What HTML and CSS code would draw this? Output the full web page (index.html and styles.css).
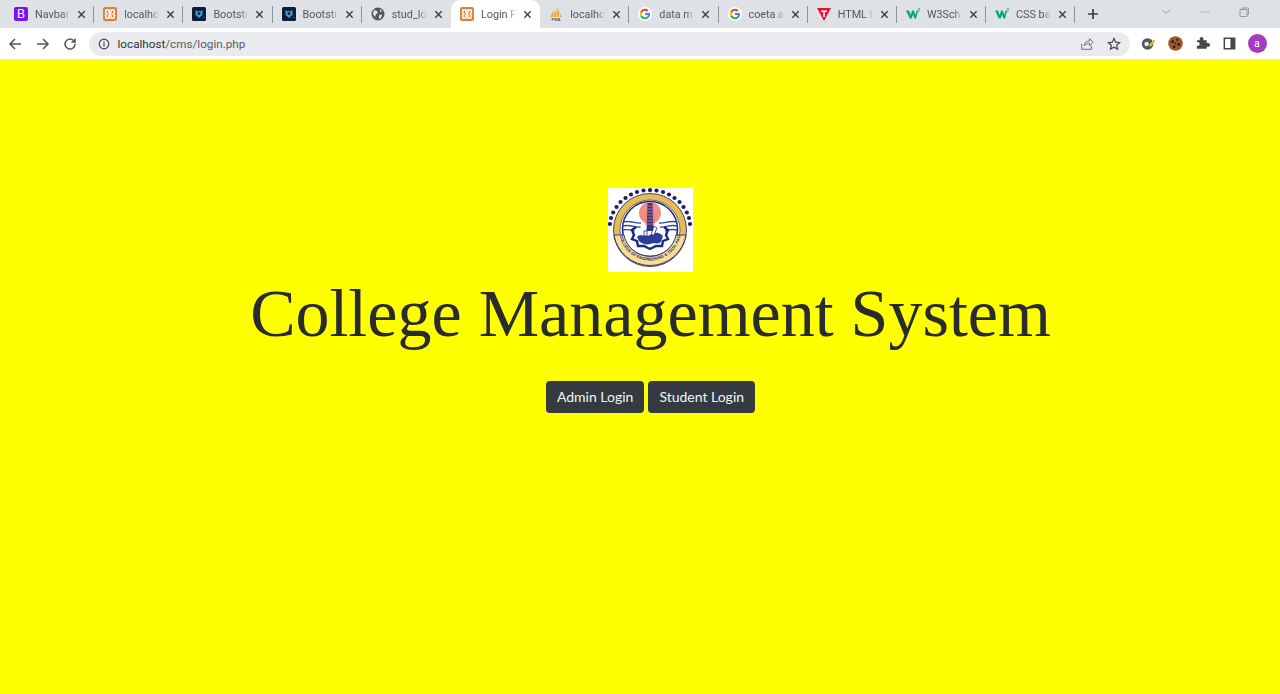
FILE: index.html
```html
<!DOCTYPE html>
<html lang="en">
<head>
<meta charset="utf-8">
<title>Login Page</title>
<link rel="stylesheet" href="styles.css">
</head>
<body>
<svg class="defs" width="0" height="0" aria-hidden="true">
  <symbol id="i-xampp" viewBox="0 0 14 14"><rect width="14" height="14" rx="2" fill="#e0803a"/><path d="M3 3h3v2.500L7 7 6 8.500V11H3l-.5-2.500L4 7 2.500 5.500zM11 3H8v2.500L7 7l1 1.500V11h3l.5-2.500L10 7l1.500-1.500z" fill="none" stroke="#fff" stroke-width="1.500"/></symbol>
  <symbol id="i-boot" viewBox="0 0 14 14"><rect width="14" height="14" rx="1.500" fill="#0b1c3d"/><path d="M3.500 3l1.500 1h4l1.500-1v5L7 11 3.500 8z" fill="#3f9bc9"/><circle cx="7" cy="6.500" r="1.400" fill="#0b1c3d"/><rect x="11" y="10" width="2" height="1" fill="#7a2bd0"/></symbol>
  <symbol id="i-g" viewBox="0 0 16 16"><circle cx="8" cy="8" r="8" fill="#fff"/><path d="M13.800 8.100c0-.4 0-.8-.1-1.200H8v2.300h3.300c-.1.800-.6 1.400-1.200 1.800l1.900 1.500c1.100-1 1.800-2.500 1.800-4.400z" fill="#4285f4"/><path d="M8 14c1.600 0 3-.5 4-1.500l-1.900-1.500c-.5.400-1.200.6-2.100.6-1.600 0-2.900-1-3.400-2.500l-2 1.500C3.600 12.600 5.600 14 8 14z" fill="#34a853"/><path d="M4.600 9.100c-.3-.7-.3-1.500 0-2.200l-2-1.500c-.8 1.600-.8 3.600 0 5.200z" fill="#fbbc05"/><path d="M8 4.400c.9 0 1.700.3 2.300.9l1.700-1.700C11 2.600 9.600 2 8 2 5.600 2 3.600 3.400 2.600 5.400l2 1.500C5.100 5.400 6.400 4.400 8 4.400z" fill="#ea4335"/></symbol>
  <symbol id="i-w3" viewBox="0 0 16 12"><path d="M0 2h3.500l1.800 5L7 2h2l1.700 5 1.500-5H14l-2.500 9H9.500L8 6.500 6.500 11H4.300z" fill="#04aa6d"/><path d="M13.500 0h2.300l-1 1.200c.7.200.8 1.600-.6 1.700l-.8-.1" fill="none" stroke="#04aa6d" stroke-width=".8"/></symbol>
  <symbol id="i-x" viewBox="0 0 10 10"><path d="M1.500 1.500l7 7M8.500 1.500l-7 7" stroke="#3c4043" stroke-width="1.500" fill="none"/></symbol>
</svg>

<header class="chrome">
  <div class="tabstrip">
    <div class="tab"><svg class="fav" viewBox="0 0 14 14"><rect width="14" height="14" rx="2" fill="#7a12f0"/><text x="7" y="11" class="fav-b">B</text></svg><span class="tab-title">Navbar</span><svg class="close"><use href="#i-x"/></svg></div>
    <div class="tab"><svg class="fav"><use href="#i-xampp"/></svg><span class="tab-title">localhost</span><svg class="close"><use href="#i-x"/></svg></div>
    <div class="tab"><svg class="fav"><use href="#i-boot"/></svg><span class="tab-title">Bootstrap</span><svg class="close"><use href="#i-x"/></svg></div>
    <div class="tab"><svg class="fav"><use href="#i-boot"/></svg><span class="tab-title">Bootstrap</span><svg class="close"><use href="#i-x"/></svg></div>
    <div class="tab"><svg class="fav" viewBox="0 0 14 14"><circle cx="7" cy="7" r="6.500" fill="#55585c"/><path d="M3 3l3 1 1 2-2 1-1 3-2-3zM9 2l2 2-2 1zM8 8l3-.5-1 3.500-2 1z" fill="#e3e5e8"/></svg><span class="tab-title">stud_login</span><svg class="close"><use href="#i-x"/></svg></div>
    <div class="tab tab-active"><svg class="fav"><use href="#i-xampp"/></svg><span class="tab-title">Login Page</span><svg class="close"><use href="#i-x"/></svg></div>
    <div class="tab"><svg class="fav" viewBox="0 0 14 14"><path d="M1 10L5 3l1.500 3L8 1l5 9z" fill="#e8a33c"/><path d="M5 4v6M8 3v7M10.500 6v4" stroke="#fff" stroke-width=".6"/><rect y="10" width="14" height="4" fill="#dee1e6"/><text x="7" y="13.800" class="fav-pma">PMA</text></svg><span class="tab-title">localhost</span><svg class="close"><use href="#i-x"/></svg></div>
    <div class="tab"><svg class="fav"><use href="#i-g"/></svg><span class="tab-title">data mining</span><svg class="close"><use href="#i-x"/></svg></div>
    <div class="tab"><svg class="fav"><use href="#i-g"/></svg><span class="tab-title">coeta akola</span><svg class="close"><use href="#i-x"/></svg></div>
    <div class="tab"><svg class="fav" viewBox="0 0 14 14"><path d="M0 1h14L7 14z" fill="#e8112d"/><path d="M4 3.500h6v1.500H7.800v5H6.200V5H4z" fill="#fff"/></svg><span class="tab-title">HTML Bas</span><svg class="close"><use href="#i-x"/></svg></div>
    <div class="tab"><svg class="fav"><use href="#i-w3"/></svg><span class="tab-title">W3Schools</span><svg class="close"><use href="#i-x"/></svg></div>
    <div class="tab"><svg class="fav"><use href="#i-w3"/></svg><span class="tab-title">CSS back</span><svg class="close"><use href="#i-x"/></svg></div>
    <svg class="newtab" viewBox="0 0 12 12"><path d="M6 1v10M1 6h10" stroke="#3c4043" stroke-width="1.700"/></svg>
    <div class="winctl">
      <svg class="win" viewBox="0 0 12 12"><path d="M2 4l4 3 4-3" stroke="#a5a7ab" fill="none"/></svg>
      <svg class="win" viewBox="0 0 12 12"><path d="M1 6h10" stroke="#b5b7ba"/></svg>
      <svg class="win" viewBox="0 0 12 12"><path d="M2 3.500h7v7H2zM4 3.500V2h6.500v6.500H9" stroke="#9a9c9f" fill="none"/></svg>
    </div>
  </div>
  <div class="toolbar">
    <svg class="tool" viewBox="0 0 16 16"><path d="M14 8H3M8 3L3 8l5 5" stroke="#50545a" stroke-width="1.500" fill="none"/></svg>
    <svg class="tool" viewBox="0 0 16 16"><path d="M2 8h11M8 3l5 5-5 5" stroke="#50545a" stroke-width="1.500" fill="none"/></svg>
    <svg class="tool" viewBox="0 0 16 16"><path d="M13 8a5 5 0 1 1-1.500-3.500L13 6V2.500M13 6H9.500" stroke="#50545a" stroke-width="1.500" fill="none"/></svg>
    <div class="omnibox">
      <svg class="info" viewBox="0 0 12 12"><circle cx="6" cy="6" r="4.800" stroke="#45484c" stroke-width="1.200" fill="none"/><path d="M6 5.300v3.200M6 3.300v1.200" stroke="#45484c" stroke-width="1.200"/></svg>
      <span class="url"><span class="host">localhost</span>/cms/login.php</span>
      <svg class="omni-icon" viewBox="0 0 16 16"><path d="M2 8v6h11v-4M5 10c0-4 3-5.500 6-5.500V2l4 4-4 4V7.500c-2.500 0-4.500.5-6 2.500z" stroke="#5a5d61" fill="none"/></svg>
      <svg class="omni-icon" viewBox="0 0 16 16"><path d="M8 1.800l1.900 4.100 4.500.5-3.300 3 .9 4.400L8 11.600l-4 2.200.9-4.400-3.300-3 4.500-.5z" stroke="#45484c" stroke-width="1.400" fill="none"/></svg>
    </div>
    <div class="extensions">
      <svg class="ext" viewBox="0 0 16 16"><circle cx="7" cy="8.500" r="6.200" fill="#55595c"/><circle cx="6" cy="8.500" r="2.400" fill="#e8e8e8"/><path d="M8.500 9.500l5.500-6 1.500 1.500-5 6.500z" fill="#e8b83c"/></svg>
      <svg class="ext" viewBox="0 0 16 16"><circle cx="8" cy="8" r="7.800" fill="#9c5a2e"/><circle cx="5" cy="6" r="1.500" fill="#33190b"/><circle cx="10" cy="4" r="1.200" fill="#33190b"/><circle cx="11.500" cy="9" r="1.500" fill="#33190b"/><circle cx="6.500" cy="11.500" r="1.400" fill="#33190b"/><circle cx="8" cy="7.800" r="1" fill="#33190b"/></svg>
      <svg class="ext" viewBox="0 0 16 16"><path d="M2 6h3V4.500a2 2 0 0 1 4 0V6h3.500v3H14a2 2 0 0 1 0 4h-1.500v2H2v-3h1a2 2 0 0 0 0-4H2z" fill="#45484c" transform="translate(0 -1.500)"/></svg>
      <svg class="ext" viewBox="0 0 16 16"><path d="M2.500 2.500h11v11h-11z" stroke="#45484c" stroke-width="1.600" fill="none"/><rect x="9" y="2.500" width="4.500" height="11" fill="#45484c"/></svg>
      <span class="avatar">a</span>
    </div>
  </div>
</header>

<main class="page">
  <svg class="logo" viewBox="0 0 85 84" role="img" aria-label="College of Engineering and Technology, Akola emblem">
    <rect width="85" height="84" fill="#fff"/>
    <g fill="#1b1a6e">
      <circle cx="42" cy="2.200" r="2.100"/><circle cx="48.500" cy="2.500" r="2.100"/><circle cx="55" cy="4" r="2.100"/><circle cx="61" cy="6.500" r="2.100"/><circle cx="66.500" cy="10" r="2.100"/><circle cx="71.500" cy="14" r="2.100"/><circle cx="75.500" cy="19" r="2.100"/><circle cx="78.800" cy="24.500" r="2.100"/><circle cx="81" cy="30" r="2.100"/><circle cx="82" cy="36" r="2.100"/>
      <circle cx="35.500" cy="2.500" r="2.100"/><circle cx="29" cy="4" r="2.100"/><circle cx="23" cy="6.500" r="2.100"/><circle cx="17.500" cy="10" r="2.100"/><circle cx="12.500" cy="14" r="2.100"/><circle cx="8.500" cy="19" r="2.100"/><circle cx="5.200" cy="24.500" r="2.100"/><circle cx="3" cy="30" r="2.100"/><circle cx="2" cy="36" r="2.100"/>
    </g>
    <circle cx="42" cy="42" r="36.500" fill="#e5bd55" stroke="#1b1a6e" stroke-width=".8"/>
    <circle cx="42" cy="42" r="30" fill="#fff" stroke="#1b1a6e" stroke-width=".6"/>
    <circle cx="42" cy="41" r="27.500" fill="#fff" stroke="#1b2a7a" stroke-width="1.600"/>
    <path d="M15 34c8-2 13 2 18 1M14.500 38c8-2 13 2 18 1M14.500 42c4-1 8 0 12 1M51 35c5 1 10-3 18-1M52 39c5 1 10-3 17-1M57 43c3-1 8-2 12-1" fill="none" stroke="#2c4aa8" stroke-width="1.400"/>
    <circle cx="42" cy="25" r="11" fill="#ef8f86"/>
    <path d="M39.500 15h5l1 28h-7z" fill="#27358f"/>
    <path d="M38 18h8M38 21h8M37.500 24h9M37.500 27h9M37 30h10M37 33h10M37 36h10" stroke="#ef6f66" stroke-width=".9"/>
    <path d="M28 39l-4 3 2 5-2 4 5 2 1 5 6 0 6 3 6-3 6 0 1-5 5-2-2-4 2-5-4-3" fill="none" stroke="#1b2a7a" stroke-width="2.400"/>
    <path d="M29 49c4-4 7 1 13-2 5-3 9-3 13 1l-2 6c-4 3-7 0-11 2-4 1-8 0-11-3z" fill="#2a3f9c"/>
    <path d="M36 43h3v5h-3zM46 38l3 2-3 7h-3z" fill="#fff" stroke="#1b2a7a" stroke-width=".8"/>
    <path d="M6 47A36.500 36.500 0 0 0 78 47L68 47A26.500 26.500 0 0 1 16 47Z" fill="#f6df92" stroke="#1b1a6e" stroke-width=".8"/>
    <path id="logo-arc" d="M11.500 47A31 31 0 0 0 72.500 47" fill="none"/>
    <text class="logo-text"><textPath href="#logo-arc" startOffset="1">COLLEGE OF ENGINEERING &amp; TECH, AKOLA</textPath></text>
  </svg>
  <h1 class="title">College Management System</h1>
  <div class="actions">
    <a class="btn" href="#">Admin Login</a>
    <a class="btn" href="#">Student Login</a>
  </div>
</main>
</body>
</html>
```
FILE: styles.css
```css
* { box-sizing: border-box; }
html, body { margin: 0; height: 100%; }
body { background: #ffff00; overflow: hidden; display: flex; flex-direction: column; }
.defs { position: absolute; }

.chrome { flex: none; font-family: "Roboto", "Noto Sans", sans-serif; color: #55575a; }
.tabstrip { height: 28px; background: #dee1e6; display: flex; align-items: center; padding-left: 5px; }
.tab { width: 89.2px; height: 28px; display: flex; align-items: center; padding-left: 9px; position: relative; flex: none; }
.tab::after { content: ""; position: absolute; right: 0; top: 6px; height: 17px; width: 1px; background: #8e9195; }
.tab:nth-child(5)::after, .tab:nth-child(6)::after { display: none; }
.tab-active { background: #fff; border-radius: 9px 9px 0 0; }
.fav { width: 14px; height: 14px; flex: none; }
.fav-b { font: 400 12px "Liberation Sans", sans-serif; fill: #fff; text-anchor: middle; }
.fav-pma { font: bold 4px "Liberation Sans", sans-serif; fill: #555; text-anchor: middle; }
.tab-title { font-size: 10.800px; margin-left: 7px; width: 35px; overflow: hidden; white-space: nowrap; flex: none;
  -webkit-mask-image: linear-gradient(to right, #000 78%, transparent); mask-image: linear-gradient(to right, #000 78%, transparent); }
.close { width: 9px; height: 9px; margin-left: 7px; flex: none; }
.newtab { width: 12px; height: 12px; margin-left: 12px; flex: none; }
.winctl { display: flex; margin-left: auto; gap: 27px; padding-right: 30px; position: relative; top: -2px; }
.win { width: 12px; height: 12px; }

.toolbar { height: 32px; background: #fff; display: flex; align-items: center; padding-left: 7px; border-bottom: 1px solid #e8e8c8; }
.tool { width: 16px; height: 16px; margin-right: 11.500px; flex: none; }
.omnibox { width: 1041px; height: 24px; margin-left: -1px; flex: none; background: #e9ebee; border-radius: 12px; display: flex; align-items: center; padding-left: 9px; }
.info { width: 12px; height: 12px; flex: none; }
.url { font-size: 11.700px; margin-left: 8px; color: #5a5d61; flex: 1; }
.host { color: #303134; }
.omni-icon { width: 14px; height: 14px; margin-right: 13px; flex: none; }
.omni-icon:last-child { margin-right: 9px; }
.extensions { display: flex; align-items: center; gap: 12px; margin-left: 11px; }
.ext { width: 15px; height: 15px; flex: none; }
.avatar { width: 19px; height: 19px; margin-left: -1px; border-radius: 50%; background: #a83cc0; color: #fff; font-size: 10px; display: flex; align-items: center; justify-content: center; }

.page { flex: 1; background: #ffff00; display: flex; flex-direction: column; align-items: center; padding: 128px 0 0 21px; }
.logo { width: 85px; height: 84px; display: block; flex: none; }
.logo-text { font: bold 4.100px "Liberation Sans", sans-serif; fill: #1b1a6e; }
.title { margin: 0; font-family: "Liberation Serif", "Times New Roman", serif; font-weight: 400; font-size: 68px; line-height: 83px; color: #292b2c; }
.actions { display: flex; gap: 4px; margin-top: 26px; }
.btn { display: block; padding: 6px 11px; height: 32px; line-height: 20px; font-family: "Lato", "Noto Sans", sans-serif; font-size: 14px; color: #f4f5f6; background: #343a40; border-radius: 4px; text-decoration: none; }
```
